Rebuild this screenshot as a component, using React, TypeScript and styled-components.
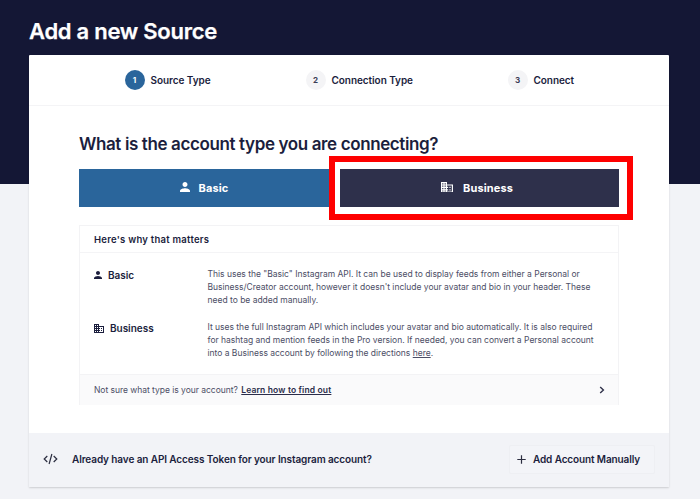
import React from 'react';
import styled, { createGlobalStyle } from 'styled-components';

const Global = createGlobalStyle`
  * { box-sizing: border-box; }
  body { margin: 0; background: #f2f3f7; font-family: Inter, "Liberation Sans", sans-serif; color: #1b1e3d; }
  h1, h2, h3, p { margin: 0; }
  button { font: inherit; margin: 0; border: 0; cursor: pointer; }
`;

const Page = styled.div`
  height: 499px;
  overflow: hidden;
  padding: 0 31px 0 29px;
  background: linear-gradient(#141735 0 184px, #f2f3f7 184px);
`;

const Title = styled.h1`
  height: 55px;
  padding-top: 17px;
  font-size: 22px;
  line-height: 28px;
  font-weight: 600;
  letter-spacing: -0.27px;
  color: #fff;
  -webkit-text-stroke: 0.25px #fff;
  white-space: nowrap;
`;

const Card = styled.main`
  height: 432px;
  display: flex;
  flex-direction: column;
  background: #fff;
  border-radius: 1px;
  box-shadow: 0 1px 2px rgba(0, 0, 0, 0.16);
`;

const Steps = styled.ol`
  list-style: none;
  margin: 0;
  height: 51px;
  flex: none;
  display: grid;
  grid-template-columns: 181px 202px 1fr;
  align-items: center;
  padding: 0 0 0 95.5px;
  border-bottom: 1px solid #f4f4f6;
`;

const Step = styled.li`
  display: flex;
  align-items: center;
  gap: 6px;
  font-size: 10px;
  font-weight: 600;
  letter-spacing: -0.06px;
  white-space: nowrap;
`;

const StepNumber = styled.span<{ $active?: boolean }>`
  width: 20px;
  height: 20px;
  border-radius: 50%;
  display: grid;
  place-items: center;
  font-size: 8px;
  font-weight: 700;
  background: ${p => (p.$active ? '#2a659b' : '#f4f4f6')};
  color: ${p => (p.$active ? '#fff' : '#3a3c55')};
`;

const Content = styled.section`
  flex: 1;
  padding: 25px 50px 0;
`;

const Question = styled.h2`
  height: 38px;
  font-size: 17px;
  line-height: 27px;
  font-weight: 600;
  letter-spacing: -0.38px;
  white-space: nowrap;
`;

const Choices = styled.div`
  position: relative;
  display: grid;
  grid-template-columns: 250px 279px;
  justify-content: space-between;
  height: 38px;
  margin-bottom: 18px;
`;

const Choice = styled.button<{ $dark?: boolean }>`
  display: flex;
  align-items: center;
  justify-content: center;
  gap: ${p => (p.$dark ? 10 : 9)}px;
  padding: ${p => (p.$dark ? '0 5px 0 0' : '0')};
  background: ${p => (p.$dark ? '#2e304b' : '#2a659b')};
  color: #fff;
  font-size: 11px;
  font-weight: 700;
  letter-spacing: 0.12px;
  svg { margin-bottom: 2px; }
`;

const Highlight = styled.div`
  position: absolute;
  left: 250px;
  top: -13px;
  width: 304px;
  height: 64px;
  border: 6px solid #fe0000;
  pointer-events: none;
`;

const Panel = styled.div`
  height: 180px;
  display: flex;
  flex-direction: column;
  border: 1px solid #f3f3f5;
`;

const PanelHead = styled.h3`
  height: 27px;
  flex: none;
  padding-left: 14px;
  border-bottom: 1px solid #f4f4f6;
  font-size: 9.5px;
  line-height: 28px;
  font-weight: 600;
  letter-spacing: 0.26px;
`;

const Reasons = styled.div`
  flex: 1;
  display: grid;
  grid-template-rows: 53px 53px;
  padding: 15px 0 0 14px;
`;

const Reason = styled.div`
  display: grid;
  grid-template-columns: 113.5px 1fr;
`;

const ReasonName = styled.div`
  display: flex;
  align-items: center;
  gap: 6px;
  height: 14px;
  font-size: 10px;
  font-weight: 600;
  letter-spacing: -0.03px;
`;

const ReasonText = styled.p`
  font-size: 8.5px;
  line-height: 13px;
  letter-spacing: -0.01px;
  color: #4c4e66;
  white-space: nowrap;
`;

const Line = styled.span`
  display: block;
`;

const PanelFoot = styled.div`
  height: 31px;
  flex: none;
  display: flex;
  align-items: center;
  padding: 0 13px 0 14px;
  border-top: 1px solid #f3f3f5;
  background: #fafafb;
  font-size: 8.5px;
  color: #4c4e66;
  gap: 3.5px;
  svg { margin-left: auto; }
`;

const Hint = styled.span`
  letter-spacing: -0.03px;
`;

const Link = styled.a<{ $strong?: boolean }>`
  color: ${p => (p.$strong ? '#2b2d4a' : 'inherit')};
  font-weight: ${p => (p.$strong ? 600 : 400)};
  letter-spacing: ${p => (p.$strong ? '0.15px' : 'inherit')};
  text-decoration: underline;
  text-underline-offset: 1px;
`;

const TokenBar = styled.footer`
  height: 54px;
  flex: none;
  display: flex;
  align-items: center;
  padding: 0 14px 2px;
  background: #f2f3f7;
  font-size: 10px;
  font-weight: 600;
`;

const TokenText = styled.span`
  margin-left: 14px;
  letter-spacing: -0.1px;
  white-space: nowrap;
`;

const AddButton = styled.button`
  margin-left: auto;
  width: 146px;
  height: 29px;
  display: flex;
  align-items: center;
  gap: 7px;
  padding: 0 7px;
  border: 1px solid #eeeff3;
  border-radius: 2px;
  background: #f3f4f8;
  color: #1b1e3d;
  letter-spacing: -0.12px;
  white-space: nowrap;
`;

const PersonIcon = ({ size = 10 }: { size?: number }) => (
  <svg width={size} height={size} viewBox="4 4 16 16" fill="currentColor">
    <path d="M12 12c2.21 0 4-1.79 4-4s-1.79-4-4-4-4 1.79-4 4 1.79 4 4 4zm0 2c-2.67 0-8 1.34-8 4v2h16v-2c0-2.66-5.33-4-8-4z" />
  </svg>
);

const BuildingIcon = ({ width = 12 }: { width?: number }) => (
  <svg width={width} height={width * 0.9} viewBox="2 3 20 18" fill="currentColor">
    <path d="M12 7V3H2v18h20V7H12zM6 19H4v-2h2v2zm0-4H4v-2h2v2zm0-4H4V9h2v2zm0-4H4V5h2v2zm4 12H8v-2h2v2zm0-4H8v-2h2v2zm0-4H8V9h2v2zm0-4H8V5h2v2zm10 12h-8v-2h2v-2h-2v-2h2v-2h-2V9h8v10zm-2-8h-2v2h2v-2zm0 4h-2v2h2v-2z" />
  </svg>
);

const ChevronIcon = () => (
  <svg width="6" height="8" viewBox="0 0 6 8" fill="none" stroke="#30324a" strokeWidth="1.4">
    <path d="M1.2 1 4.4 4 1.2 7" />
  </svg>
);

const CodeIcon = () => (
  <svg width="15" height="12" viewBox="0 0 15 12" fill="none" stroke="#2b2d40" strokeWidth="1.2">
    <path d="M4.3 3 1.2 6l3.1 3M10.7 3l3.1 3-3.1 3M8.9 1 6.1 11" />
  </svg>
);

const PlusIcon = () => (
  <svg width="9" height="9" viewBox="0 0 9 9" stroke="#2b2d40" strokeWidth="1.2">
    <path d="M4.5 0.3v8.4M0.3 4.5h8.4" />
  </svg>
);

export default function App() {
  return (
    <>
      <Global />
      <Page>
        <Title>Add a new Source</Title>
        <Card>
          <Steps>
            <Step><StepNumber $active>1</StepNumber>Source Type</Step>
            <Step><StepNumber>2</StepNumber>Connection Type</Step>
            <Step><StepNumber>3</StepNumber>Connect</Step>
          </Steps>
          <Content>
            <Question>What is the account type you are connecting?</Question>
            <Choices>
              <Choice><PersonIcon />Basic</Choice>
              <Choice $dark><BuildingIcon />Business</Choice>
              <Highlight />
            </Choices>
            <Panel>
              <PanelHead>Here's why that matters</PanelHead>
              <Reasons>
                <Reason>
                  <ReasonName><PersonIcon size={8} />Basic</ReasonName>
                  <ReasonText>
                    <Line>This uses the "Basic" Instagram API. It can be used to display feeds from either a Personal or</Line>
                    <Line>Business/Creator account, however it doesn't include your avatar and bio in your header. These</Line>
                    <Line>need to be added manually.</Line>
                  </ReasonText>
                </Reason>
                <Reason>
                  <ReasonName><BuildingIcon width={10} />Business</ReasonName>
                  <ReasonText>
                    <Line>It uses the full Instagram API which includes your avatar and bio automatically. It is also required</Line>
                    <Line>for hashtag and mention feeds in the Pro version. If needed, you can convert a Personal account</Line>
                    <Line>into a Business account by following the directions <Link>here</Link>.</Line>
                  </ReasonText>
                </Reason>
              </Reasons>
              <PanelFoot>
                <Hint>Not sure what type is your account?</Hint>
                <Link $strong>Learn how to find out</Link>
                <ChevronIcon />
              </PanelFoot>
            </Panel>
          </Content>
          <TokenBar>
            <CodeIcon />
            <TokenText>Already have an API Access Token for your Instagram account?</TokenText>
            <AddButton><PlusIcon />Add Account Manually</AddButton>
          </TokenBar>
        </Card>
      </Page>
    </>
  );
}
